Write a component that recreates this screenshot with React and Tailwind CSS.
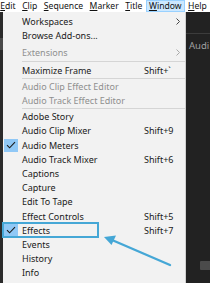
import React from "react";

const font = { fontFamily: '"Noto Sans", "Open Sans", sans-serif' };

function Check() {
  return (
    <div className="w-[14px] h-[13px] bg-[#90c8f6] flex items-center justify-center">
      <svg width="10" height="8" viewBox="0 0 10 8">
        <path d="M1 4.2 L3.6 6.8 L9 1.2" fill="none" stroke="#1a1a1a" strokeWidth="1.1" />
      </svg>
    </div>
  );
}

function Item({ label, shortcut, sub, disabled, checked }) {
  const color = disabled ? "text-[#8f8f8f]" : "text-[#1a1a1a]";
  return (
    <div className={`flex items-center h-[14.2px] ${color}`}>
      <div className="w-[19px] flex items-center justify-start pl-[1px]">
        {checked ? <Check /> : null}
      </div>
      <div className="flex-1 leading-none whitespace-nowrap">{label}</div>
      <div className="w-[41px] flex items-center leading-none whitespace-nowrap">
        {shortcut ? <span>{shortcut}</span> : null}
        {sub ? (
          <span className="ml-auto mr-[5px]">
            <svg width="4" height="7" viewBox="0 0 4 7">
              <path d="M0.5 0.5 L3.5 3.5 L0.5 6.5" fill="none" stroke={disabled ? "#a0a0a0" : "#333"} strokeWidth="0.9" />
            </svg>
          </span>
        ) : null}
      </div>
    </div>
  );
}

function Sep({ h, line = true }) {
  return (
    <div className={`flex items-center ${h}`}>
      <div className="w-[19px]" />
      {line ? <div className="flex-1 h-px bg-[#d5d5d5]" /> : null}
    </div>
  );
}

function MenuTitle({ first, rest, active }) {
  return (
    <div
      className={`h-full flex items-center px-[2.25px] leading-none border ${
        active ? "bg-[#cce8ff] border-[#99d1ff]" : "border-transparent"
      }`}
    >
      <span className="underline decoration-[0.5px] underline-offset-[1px]">{first}</span>
      <span>{rest}</span>
    </div>
  );
}

export default function App() {
  return (
    <div
      className="relative w-[210px] h-[283px] overflow-hidden bg-[#232323] text-[9px]"
      style={font}
    >
      {/* menu bar */}
      <div className="h-[12px] bg-white flex items-center text-[#111] -ml-[3px] text-[8.6px]">
        <MenuTitle first="E" rest="dit" />
        <MenuTitle first="C" rest="lip" />
        <MenuTitle first="S" rest="equence" />
        <MenuTitle first="M" rest="arker" />
        <MenuTitle first="T" rest="itle" />
        <MenuTitle first="W" rest="indow" active />
        <MenuTitle first="H" rest="elp" />
      </div>

      <div className="flex h-[271px]">
        {/* left dark strip */}
        <div className="w-[3px] bg-[#2b2b2b] flex flex-col">
          <div className="h-[26px]" />
          <div className="h-[12px] bg-[#4a4a4a]" />
        </div>

        {/* dropdown */}
        <div className="w-[183px] bg-[#f2f2f2] border-r border-[#cfcfcf] pt-[2px]">
          <Item label="Workspaces" sub />
          <Item label="Browse Add-ons..." />
          <Sep h="h-[3.5px]" line={false} />
          <Item label="Extensions" sub disabled />
          <Sep h="h-[3px]" />
          <Item label="Maximize Frame" shortcut="Shift+`" />
          <Sep h="h-[2px]" />
          <Item label="Audio Clip Effect Editor" disabled />
          <Item label="Audio Track Effect Editor" disabled />
          <Sep h="h-[2px]" />
          <Item label="Adobe Story" />
          <Item label="Audio Clip Mixer" shortcut="Shift+9" />
          <Item label="Audio Meters" checked />
          <Item label="Audio Track Mixer" shortcut="Shift+6" />
          <Item label="Captions" />
          <Item label="Capture" />
          <Item label="Edit To Tape" />
          <Item label="Effect Controls" shortcut="Shift+5" />
          <Item label="Effects" shortcut="Shift+7" checked />
          <Item label="Events" />
          <Item label="History" />
          <Item label="Info" />
        </div>

        {/* right dark panel */}
        <div className="flex-1 bg-[#222222] flex flex-col">
          <div className="h-[21px]" />
          <div className="h-px bg-[#3c3c3c]" />
          <div className="h-[23px] flex items-center pl-[3px] text-[#a0a0a0] text-[9.5px] leading-none whitespace-nowrap">
            Audi
          </div>
          <div className="flex-1" />
          <div className="h-[9px] ml-[14px] mb-[13px] bg-[#4b4b4b] rounded-l-[1px]" />
        </div>
      </div>

      {/* annotation box around Effects */}
      <div className="absolute left-[2px] top-[222px] w-[97px] h-[16px] border-2 border-[#45a7d6] pointer-events-none" />

      {/* annotation arrow */}
      <svg
        className="absolute left-0 top-0 pointer-events-none"
        width="210"
        height="283"
        viewBox="0 0 210 283"
      >
        <line x1="170" y1="265" x2="112" y2="240" stroke="#45a7d6" strokeWidth="2.4" strokeLinecap="round" />
        <polygon points="104,237 116,235.5 111.5,245" fill="#45a7d6" />
      </svg>
    </div>
  );
}
